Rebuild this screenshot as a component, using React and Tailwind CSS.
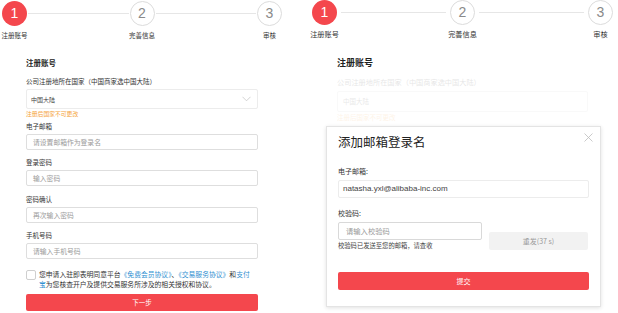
import React from "react";

const FONT = { fontFamily: '"Noto Sans CJK SC", "Liberation Sans", sans-serif' };

function Stepper({ big }) {
  const steps = ["注册账号", "完善信息", "审核"];
  return (
    <div className={big ? "flex items-start w-[301px] ml-[12px]" : "flex items-start w-[280px] ml-[2px] mt-[1px]"}>
      {steps.map((s, i) => (
        <React.Fragment key={s}>
          <div className="flex flex-col items-center w-[25px] shrink-0">
            <div
              className={
                i === 0
                  ? "w-[25px] h-[25px] rounded-full bg-[#f4474d] text-white flex items-center justify-center text-[14px] font-light"
                  : "w-[25px] h-[25px] rounded-full border border-[#dcdcdc] bg-white text-[#8a8a8a] flex items-center justify-center text-[14px] font-light"
              }
              style={{ fontFamily: '"Liberation Sans", sans-serif' }}
            >
              {i + 1}
            </div>
            <div className={big ? "mt-[3px] whitespace-nowrap text-[7.2px] leading-[12px] text-[#333]" : "mt-[3px] whitespace-nowrap text-[6.5px] leading-[12px] text-[#333]"}>
              {s}
            </div>
          </div>
          {i < 2 && (
            <div className={big ? "flex-1 h-px bg-[#e6e6e6] mt-[12px] mx-[4px]" : "flex-1 h-px bg-[#e6e6e6] mt-[12px] mx-[1px]"} />
          )}
        </React.Fragment>
      ))}
    </div>
  );
}

function Field({ label, placeholder, mt }) {
  return (
    <>
      <div className={"text-[6.5px] leading-[12px] text-[#333] " + mt}>{label}</div>
      <div className="mt-[2px] h-[16px] border border-[#dedede] rounded-[2px] flex items-center pl-[6px] text-[6.8px] text-[#9a9a9a]">
        {placeholder}
      </div>
    </>
  );
}

function LeftForm() {
  return (
    <div className="ml-[26px] w-[232px]">
      <div className="mt-[14px] text-[7.5px] leading-[16px] font-bold text-[#222]">注册账号</div>
      <div className="mt-[4px] text-[6.5px] leading-[12px] text-[#333]">公司注册地所在国家（中国商家选中国大陆）</div>
      <div className="mt-[2px] h-[20px] border border-[#ececec] rounded-[2px] flex items-center justify-between pl-[4px] pr-[6px]">
        <span className="text-[6px] text-[#444]">中国大陆</span>
        <svg width="9" height="6" viewBox="0 0 9 6" fill="none">
          <path d="M0.5 0.8 L4.5 4.8 L8.5 0.8" stroke="#c8c8c8" strokeWidth="0.8" />
        </svg>
      </div>
      <div className="mt-0 text-[5.8px] leading-[10px] text-[#f5a33a]">注册后国家不可更改</div>
      <Field label="电子邮箱" placeholder="请设置邮箱作为登录名" mt="mt-[1px]" />
      <Field label="登录密码" placeholder="输入密码" mt="mt-[6px]" />
      <Field label="密码确认" placeholder="再次输入密码" mt="mt-[7px]" />
      <Field label="手机号码" placeholder="请输入手机号码" mt="mt-[6px]" />
      <div className="mt-[10px] flex items-start">
        <div className="w-[10px] h-[10px] mt-[1px] border border-[#cfcfcf] rounded-[2px] shrink-0" />
        <div className="ml-[3px] text-[6.8px] leading-[10px] text-[#333]">
          您申请入驻即表明同意平台<span className="text-[#2f8fd1]">《免费会员协议》</span>、<span className="text-[#2f8fd1]">《交易服务协议》</span>和<span className="text-[#2f8fd1]">支付<br />宝</span>为您核查开户及提供交易服务所涉及的相关授权和协议。
        </div>
      </div>
      <div className="mt-[5px] h-[17px] bg-[#f4474d] rounded-[2px] flex items-center justify-center text-[6.5px] text-white">
        下一步
      </div>
    </div>
  );
}

function RightForm() {
  return (
    <div className="ml-[37px] w-[251px]">
      <div className="mt-[15px] text-[9px] leading-[16px] font-bold text-[#222]">注册账号</div>
      <div className="opacity-[0.12]">
        <div className="mt-[4px] text-[7.2px] leading-[14px] text-[#333]">公司注册地所在国家（中国商家选中国大陆）</div>
        <div className="mt-[2px] h-[21px] border border-[#cfcfcf] rounded-[2px] flex items-center justify-between pl-[5px] pr-[7px]">
          <span className="text-[6.5px] text-[#444]">中国大陆</span>
        </div>
        <div className="mt-0 text-[6.5px] leading-[11px] text-[#f5a33a]">注册后国家不可更改</div>
        <div className="h-[172px]" />
        <div className="ml-[18px] text-[7.2px] leading-[11px] text-[#333]">
          为您核查开户及提供交易服务所涉及的相关授权和协议。
        </div>
      </div>
    </div>
  );
}

function Modal() {
  return (
    <div className="absolute left-[26px] top-[126px] w-[275px] h-[181px] bg-white border border-[#e4e4e4] shadow-[0_1px_4px_rgba(0,0,0,0.12)] pl-[11px] pr-[11px]">
      <svg className="absolute right-[7px] top-[6px]" width="9" height="9" viewBox="0 0 9 9">
        <path d="M0.5 0.5 L8.5 8.5 M8.5 0.5 L0.5 8.5" stroke="#bdbdbd" strokeWidth="0.8" />
      </svg>
      <div className="mt-[6px] text-[12.5px] leading-[18px] text-[#222]">添加邮箱登录名</div>
      <div className="mt-[14px] text-[7px] leading-[12px] text-[#333]">电子邮箱:</div>
      <div className="mt-[3px] h-[18px] border border-[#ececec] rounded-[2px] flex items-center pl-[4px] text-[8px] text-[#444]" style={{ fontFamily: '"Liberation Sans", sans-serif' }}>
        natasha.yxl@alibaba-inc.com
      </div>
      <div className="mt-[9px] text-[7px] leading-[12px] text-[#333]">校验码:</div>
      <div className="flex items-start justify-between">
        <div className="w-[144px]">
          <div className="mt-[3px] h-[18px] border border-[#d9d9d9] rounded-[2px] flex items-center pl-[7px] text-[7.3px] text-[#9a9a9a]">
            请输入校验码
          </div>
          <div className="mt-[1px] text-[6.3px] leading-[10px] text-[#444]">校验码已发送至您的邮箱，请查收</div>
        </div>
        <div className="mt-[13px] mr-[1px] w-[99px] h-[18px] bg-[#f2f2f2] rounded-[2px] flex items-center justify-center text-[7px] text-[#9a9a9a]">
          重发(37 s)
        </div>
      </div>
      <div className="mt-[21px] h-[18px] bg-[#f4474d] rounded-[2px] flex items-center justify-center text-[7px] text-white">
        提交
      </div>
    </div>
  );
}

export default function App() {
  return (
    <div className="w-[618px] h-[313px] overflow-hidden bg-white flex" style={FONT}>
      <div className="w-[300px] shrink-0">
        <Stepper />
        <LeftForm />
      </div>
      <div className="relative flex-1">
        <Stepper big />
        <RightForm />
        <Modal />
      </div>
    </div>
  );
}
